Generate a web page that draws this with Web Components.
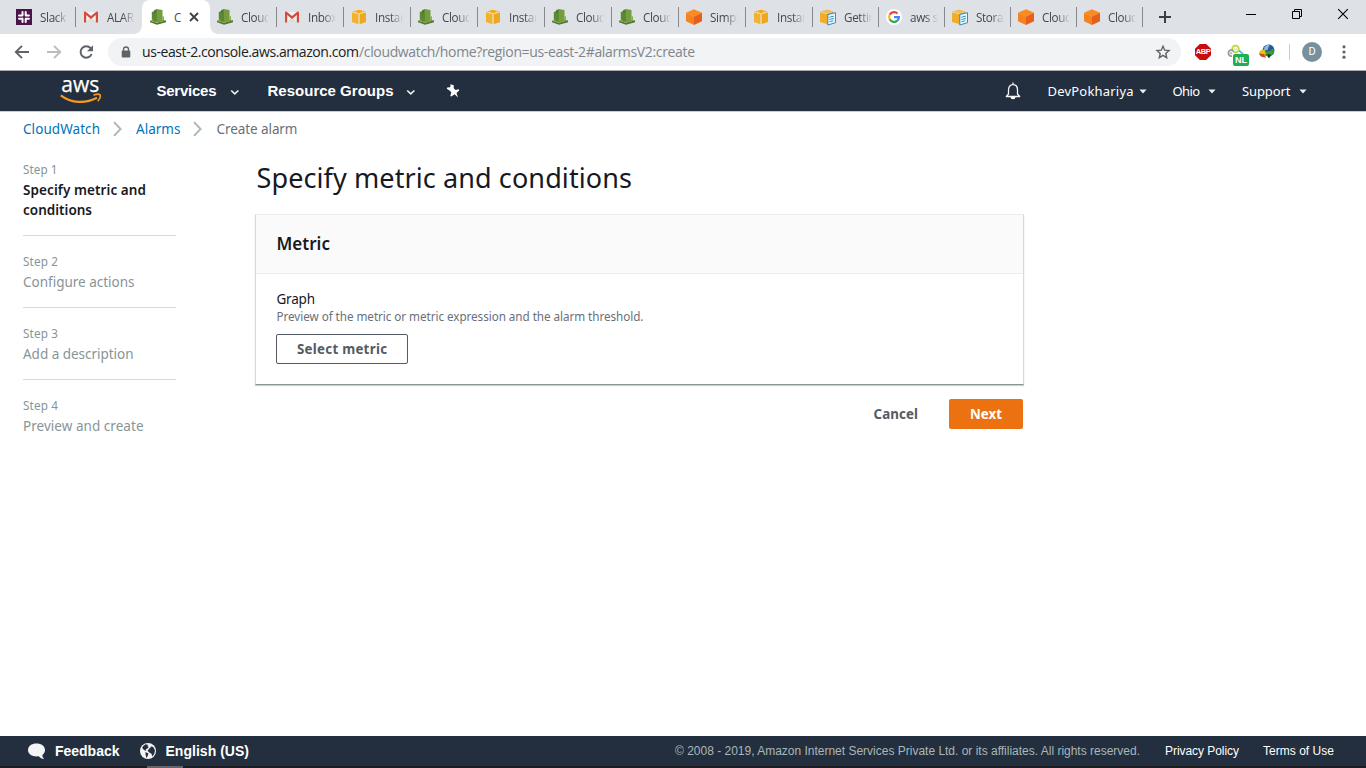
<!DOCTYPE html>
<html lang="en">
<head>
<meta charset="utf-8">
<title>Create alarm</title>
<style>
html,body{margin:0;padding:0;height:100%;overflow:hidden;background:#fff}
body{font-family:"Noto Sans","Open Sans",sans-serif}
</style>
</head>
<body>
<console-page></console-page>
<script>
function define(name, css, html, after) {
  const tpl = document.createElement('template');
  tpl.innerHTML = `<style>*{box-sizing:border-box}${css}</style>${html}`;
  customElements.define(name, class extends HTMLElement {
    constructor() {
      super();
      this.attachShadow({mode: 'open'}).appendChild(tpl.content.cloneNode(true));
    }
    connectedCallback() { if (after) after(this, this.shadowRoot); }
  });
}

/* Icon set, one SVG body per name: [viewBox width, height, markup] */
const ICONS = {
  slack: [16,16,'<path fill="#4a154b" d="M0 0h16v16H0z"/><g stroke="#fff" stroke-width="2" stroke-linecap="round"><path d="M6.500 3v3.400M9.700 3v3.400M9.700 9.700v3.200M6.500 9.700v3.200M3 6.500h3.400M9.700 6.500h3.200M3 9.700h3.400M9.700 9.700h3.200"/></g>'],
  gmail: [16,16,'<path fill="#f2f2f2" d="M1.5 3h13v10.500h-13z"/><path fill="#dcdcdc" d="M3 13.500 8 8l5 5.500z"/><path fill="#d54b3d" d="M1 13.500V3.400C1 2.600 2 2.200 2.700 2.700L8 7l5.300-4.300c.7-.5 1.700-.1 1.700.7v10.100h-2.200V6.100L8 10 3.200 6.100v7.400z"/>'],
  watch: [16,16,'<path fill="#4c7a2e" d="M0 11.700 7 13.700v2.100l-7-2.500zM16 11.200v2l-9 2.600v-2.100z"/><path fill="#759c3e" d="m0 11.700 5-1.700 11 1.200-9 2.500z"/><path fill="#5c8733" d="M1.800 3 4 2.300v9L1.800 10.600z"/><path fill="#4c7a2e" d="M4 1.200 7.200 0v12.300L4 11.300z"/><path fill="#759c3e" d="m6.500 0 6 1v10.200l-6 1.200z"/><path fill="#86ae4b" d="m12.500 7 1.500.4v3.700l-1.500.4z"/><path fill="#5c8733" d="m4 3.800 2.500.7v8L4 11.500z"/>'],
  cube: [16,16,'<path fill="#f2b22e" d="M1 3.300 7.500 5v10.200L1 13z"/><path fill="#eea820" d="M15 3.300 8.500 5v10.200L15 13z"/><path fill="#f7a80d" d="M1.500 2.500 8 .8l6.500 1.700L8 4.300z"/><path stroke="#f6d78c" stroke-width=".9" d="M1 2.900 8 4.700l7-1.800M8 4.700v10.600M4.500 2.300v2.200m7-2.200v2.200" fill="none"/>'],
  box: [16,16,'<path fill="#fb8b21" d="M8 .2 16 3.700 8 7.500 0 3.700z"/><path fill="#f58220" d="M0 3.700 8 7.500V16L0 12.300z"/><path fill="#e85f1a" d="M16 3.700 8 7.500V16l8-3.700z"/>'],
  doc: [16,16,'<path fill="#efad28" d="M0 3.200 7 5v10L0 13z"/><path fill="#f4bc4c" d="M0 2.500 7 .5l7 2-7 1.800z"/><path fill="#dc981c" d="M7 4.800 13.500 3v10L7 15z"/><path fill="#e8f5fb" stroke="#2d91c4" d="m7.800 5.500 7.700-1.800v10L7.800 16z"/><path stroke="#2d91c4" d="m10.200 8 3.600-.8M10.200 10.300l3.600-.8M10.200 12.500l3-.7M9 8.200h.6M9 10.500h.6M9 12.700h.6"/>'],
  google: [16,16,'<circle cx="8" cy="8" r="8" fill="#fff"/><g fill="none" stroke-width="2.200"><path stroke="#ea4335" d="M3.700 5.700A4.900 4.900 0 0 1 11.500 4.500"/><path stroke="#fbbc05" d="M3.700 5.700a4.900 4.900 0 0 0 0 4.600"/><path stroke="#34a853" d="M3.700 10.300a4.900 4.900 0 0 0 7.600 1.300"/><path stroke="#4285f4" d="M11.300 11.600A4.900 4.900 0 0 0 12.900 8.100H8"/></g>'],
  close: [10,10,'<path d="m1 1 8 8M9 1 1 9" stroke="#3c4043" stroke-width="1.800"/>'],
  plus: [12,12,'<path d="M6 0v12M0 6h12" stroke="#3c4043" stroke-width="2"/>'],
  min: [10,10,'<path d="M0 5.500h10" stroke="#000"/>'],
  restore: [10,10,'<path d="M.5 2.500h7v7h-7zM2.500 2.500v-2h7v7h-2" stroke="#000" fill="none"/>'],
  quit: [10,10,'<path d="m.2.2 9.600 9.600M9.800.2.2 9.800" stroke="#000" stroke-width="1.100"/>'],
  back: [16,14,'<path d="M15 7H2M8 .8 1.800 7 8 13.200" fill="none" stroke="#5f6368" stroke-width="1.900"/>'],
  forward: [16,14,'<path d="M0 7h13M7 .8 13.200 7 7 13.200" fill="none" stroke="#babcbe" stroke-width="1.900"/>'],
  reload: [16,16,'<path d="M12.600 10A5.700 5.700 0 1 1 11.600 4.200L13 5.500" fill="none" stroke="#5f6368" stroke-width="2"/><path d="M14 1.200v6H8z" fill="#5f6368"/>'],
  lock: [10,12,'<path d="M2.500 5V3.500a2.500 2.500 0 0 1 5 0V5" fill="none" stroke="#5f6368" stroke-width="1.300"/><rect x=".7" y="4.500" width="8.600" height="7" rx="1" fill="#5f6368"/>'],
  star: [16,16,'<path d="m8 2.200 1.700 4 4.300.4-3.200 2.900.9 4.200L8 11.400l-3.700 2.300.9-4.200L2 6.600l4.300-.4z" fill="none" stroke="#5f6368" stroke-width="1.400"/>'],
  idm: [18,16,'<circle cx="10.500" cy="6.500" r="6" fill="#2a5a94"/><path fill="#88bde8" d="M6.500 3a6 6 0 0 1 5-2.300L9.500 6 6 6.500z"/><path fill="#e2c51c" d="M1 9c1-3 4-4.500 6-2.500L8 10c-2 2-5 1.500-7-1z"/><path fill="#cf4a24" d="M1 9.500 6 10l2 3.500c-2 .3-6-.5-7-4z"/><path fill="#3d9e2d" d="m8 8 5-1.500 2.500-2L16 8l-5 6-3-3z"/><path fill="#153a20" d="m9 10 4 .5-2 4z"/>'],
  links: [18,16,'<g fill="none" stroke-width="1.700"><circle cx="8.500" cy="5" r="3.300" stroke="#b8d63a"/><circle cx="8.500" cy="5" r="1" stroke="#d5e68a" stroke-width="1"/><path stroke="#999" d="M6.500 7A3 3 0 1 0 5 12"/><circle cx="4" cy="9.200" r=".8" stroke="#aaa" stroke-width="1"/><path stroke="#58b7e8" d="m12 6.500 4 3.500"/></g>'],
  dots: [4,16,'<g fill="#5f6368"><circle cx="2" cy="2.800" r="1.600"/><circle cx="2" cy="8" r="1.600"/><circle cx="2" cy="13.200" r="1.600"/></g>'],
  chevron: [10,7,'<path d="m1.200 1.500 3.600 3.400 3.600-3.400" fill="none" stroke="#eee" stroke-width="1.700"/>'],
  caret: [8,5,'<path d="M.4.600h7.200L4 4.600z" fill="#eee"/>'],
  pin: [14,14,'<path fill="#fff" d="M4.500.2 7.800 1.300 7.700 4.300l1.800 1.600 3.300-.6.400 1.300-2.700 2.300L12 13.600 8.700 10.300 5.300 12.500l-1-.6 1-3.600-1.800-1.800L.8 4.800l.4-1.200L4.300 3.200z"/>'],
  bell: [16,18,'<path d="M8 .5v2M3.500 12V8C3.500 4.600 5.400 2.600 8 2.600s4.500 2 4.500 5.400v4l2.200 2.500H1.300z" fill="none" stroke="#f4f4f4" stroke-width="1.300" stroke-linejoin="round"/><path fill="#fff" d="M5.500 15h5a2.500 2.300 0 0 1-5 0z"/>'],
  crumb: [10,16,'<path d="m1 1.200 6.600 6.800L1 14.800" fill="none" stroke="#aab7b8" stroke-width="1.900"/>'],
  bubble: [18,17,'<path fill="#f5f5f5" d="M8.500.5C13.500.5 17 3.200 17 7c0 2.200-1 3.800-2.700 5 .1 1.600.8 3 1.900 4.200-2.300-.3-4.200-1.300-5.500-2.900C5 14 0 11.500 0 7 0 3.200 3.500.5 8.500.5z"/>'],
  globe: [16,16,'<circle cx="8" cy="8" r="8" fill="#f5f5f5"/><path fill="#232f3e" d="M3 3.200 5.500 1.300l3 .7L7.200 3l1.600.9L7.500 5.500l-1.800.8.600 1.600L4 6.900 2.200 5zM9.500 5.200l2.300-2 2 1.500 1.200 3-.8 3.300-2 2.500-.7-2.800-2.200-1.200L7.600 7.800zM5.500 9l3 1.500-.8 2.300L6.500 15l-.9-3z"/>'],
  aws: [44,28,'<text x="1.300" y="14.600" textLength="38" lengthAdjust="spacingAndGlyphs" font-family="Open Sans" font-weight="400" font-size="21.500" fill="#fff" stroke="#fff" stroke-width=".25">aws</text><path d="M.8 18.300c10.500 8.200 25 8.500 36.200 2.500" fill="none" stroke="#f7981f" stroke-width="2.200"/><path d="M33.500 18.300c2.500-1.100 5.500-1.200 6.500-.6.700 1.500-.3 4.400-2.300 6.400" fill="none" stroke="#f7981f" stroke-width="1.600"/>']
};

define('ui-icon', ':host{display:block;flex:none;line-height:0}svg{display:block;overflow:visible}', '<svg></svg>', (el, root) => {
  const [w, h, body] = ICONS[el.getAttribute('name')];
  const svg = root.querySelector('svg');
  svg.setAttribute('viewBox', `0 0 ${w} ${h}`);
  svg.setAttribute('width', w);
  svg.setAttribute('height', h);
  svg.innerHTML = body;
});

/* Tracks a line of text so that it fills the width named by its "w" attribute. */
define('fit-text', ':host{display:block;flex:none;white-space:nowrap}span{display:inline-block}', '<span><slot></slot></span>', (el, root) => {
  const w = parseFloat(el.getAttribute('w'));
  const span = root.querySelector('span');
  el.style.width = w + 'px';
  const natural = span.getBoundingClientRect().width;
  span.style.letterSpacing = ((w - natural) / Math.max(1, el.textContent.length - 1)) + 'px';
});

define('browser-tab', `
:host{display:flex;flex:none;width:67px;height:34px;padding-left:7px;align-items:center;position:relative;font:11.700px/16px "Open Sans",sans-serif;letter-spacing:-.35px;color:#45484c}
:host([narrow]){width:66px}
ui-icon{margin-right:8px}
.t{width:28px;overflow:hidden;white-space:nowrap;-webkit-mask-image:linear-gradient(90deg,#000 55%,transparent)}
i{margin-left:auto;width:1px;height:20px;background:#85888c}
.x{display:none}
:host([joined]) i{display:none}
:host([active]){background:#fff;border-radius:8px 8px 0 0;margin-left:-1px;width:68px;padding-left:8px}
:host([active]) .t{width:7px;-webkit-mask-image:none}
:host([active]) .x{display:block;margin:0 0 0 8px}
:host([active])::before,:host([active])::after{content:"";position:absolute;bottom:0;width:8px;height:8px}
:host([active])::before{left:-8px;background:radial-gradient(circle at 0 0,transparent 7.500px,#fff 8px)}
:host([active])::after{right:-8px;background:radial-gradient(circle at 100% 0,transparent 7.500px,#fff 8px)}
`, '<ui-icon></ui-icon><div class="t"><slot></slot></div><ui-icon class="x" name="close"></ui-icon><i></i>');

const TABS = [['slack','Slack'],['gmail','ALARM',1],['watch','C',1,1],['watch','Cloud'],['gmail','Inbox'],['cube','Instan'],['watch','Cloud'],['cube','Instan'],['watch','Cloud'],['watch','Cloud'],['box','Simpl'],['cube','Instan'],['doc','Gettin'],['google','aws s'],['doc','Storag'],['box','Cloud'],['box','Cloud']];

define('tab-strip', `
:host{display:flex;height:34px;background:#dee1e6;padding-left:9px;align-items:center}
.new{margin-left:16px}.win{display:flex;margin:0 18px 6px auto;gap:36px}
`, '<div class="new"><ui-icon name="plus"></ui-icon></div><div class="win"><ui-icon name="min"></ui-icon><ui-icon name="restore"></ui-icon><ui-icon name="quit"></ui-icon></div>', (el, root) => {
  const end = root.querySelector('.new');
  TABS.forEach(([icon, text, joined, active], i) => {
    const tab = document.createElement('browser-tab');
    if (joined) tab.setAttribute('joined', '');
    if (active) tab.setAttribute('active', '');
    if (i > 11) tab.setAttribute('narrow', '');
    tab.textContent = text;
    const ic = tab.shadowRoot.querySelector('ui-icon');
    ic.setAttribute('name', icon);
    root.insertBefore(tab, end);
  });
});

define('address-bar', `
:host{display:flex;height:36px;background:#fff;align-items:center;padding:0 20px 0 14px;font:14px/20px "Open Sans",sans-serif}
.f{margin-left:17px}.r{margin-left:16px}
.pill{display:flex;align-items:center;margin-left:13px;width:1073px;height:28px;border-radius:14px;background:#f1f3f4;padding:0 10px 0 13px;color:#202124}
.pill .u{margin-left:11px}.path{color:#80868b}.s{margin-left:auto}
.abp{margin-left:14px;width:16px;height:16px;background:#c70d0d;clip-path:polygon(30% 0,70% 0,100% 30%,100% 70%,70% 100%,30% 100%,0 70%,0 30%);color:#fff;font:bold 7.500px/16px "Liberation Sans",sans-serif;letter-spacing:-.4px;text-align:center}
.nl{position:relative;margin-left:16px}
.nl b{position:absolute;left:6px;top:10px;width:16px;height:12px;border-radius:2px;background:#1fae55;color:#fff;font:bold 9px/12px "Liberation Sans",sans-serif;text-align:center}
.idm{margin-left:13px}
.bar{margin-left:13px;width:1px;height:16px;background:#ccc}
.av{margin-left:12px;width:20px;height:20px;border-radius:50%;background:#78909c;color:#fff;font:11px/20px Roboto,sans-serif;text-align:center}
.d{margin-left:auto}
`, `<ui-icon name="back"></ui-icon><ui-icon class="f" name="forward"></ui-icon><ui-icon class="r" name="reload"></ui-icon>
<div class="pill"><ui-icon name="lock"></ui-icon><fit-text class="u" w="217">us-east-2.console.aws.amazon.com</fit-text><fit-text class="path" w="336">/cloudwatch/home?region=us-east-2#alarmsV2:create</fit-text><ui-icon class="s" name="star"></ui-icon></div>
<div class="abp">ABP</div><div class="nl"><ui-icon name="links"></ui-icon><b>NL</b></div><ui-icon class="idm" name="idm"></ui-icon><div class="bar"></div><div class="av">D</div><ui-icon class="d" name="dots"></ui-icon>`);

define('aws-nav', `
:host{display:flex;align-items:center;height:42px;background:#232f3e;border-top:1px solid #a9acaf;border-bottom:1px solid #c9ccd0;padding-left:60px;color:#fff;font:13px/20px "Noto Sans",sans-serif}
.logo{width:44px;margin-right:52.500px}
.b{font:bold 15px/20px "Liberation Sans",sans-serif}
.c1{margin:2px 28px 0 13px}.c2{margin:2px 30px 0 12px}
.bell{margin:0 27px 0 auto}
.k{margin:1px 26px 0 5px}.k2{margin:1px 26px 0 8px}.k3{margin:1px 59.500px 0 8px}
`, `<ui-icon class="logo" name="aws"></ui-icon><fit-text class="b" w="60">Services</fit-text><ui-icon class="c1" name="chevron"></ui-icon><fit-text class="b" w="126">Resource Groups</fit-text><ui-icon class="c2" name="chevron"></ui-icon><ui-icon name="pin"></ui-icon>
<ui-icon class="bell" name="bell"></ui-icon><fit-text w="86">DevPokhariya</fit-text><ui-icon class="k" name="caret"></ui-icon><fit-text w="27.500">Ohio</fit-text><ui-icon class="k2" name="caret"></ui-icon><fit-text w="48.500">Support</fit-text><ui-icon class="k3" name="caret"></ui-icon>`);

define('bread-crumbs', `
:host{display:flex;align-items:center;height:34px;padding-left:23px;font-size:13.500px;line-height:20px;color:#687078}
.a{color:#0073bb}ui-icon{margin:0 13px}.y{margin:0 14px 0 12px}
`, `<fit-text class="a" w="77">CloudWatch</fit-text><ui-icon name="crumb"></ui-icon><fit-text class="a" w="44.500">Alarms</fit-text><ui-icon class="y" name="crumb"></ui-icon><fit-text w="81">Create alarm</fit-text>`);

define('wizard-step', `
:host{display:block;width:153px;padding-bottom:15px;border-bottom:1px solid #d5dbdb;margin-bottom:16px;font-size:13.500px;line-height:20px;color:#879596}
:host(:last-child){border:0}
.n{font-size:11.700px;margin:-1px 0 1px}
:host([current]) .t{color:#16191f;font-weight:600}
`, '<div class="n"><slot name="n"></slot></div><div class="t"><slot></slot></div>');

define('ui-button', `
:host{display:flex;height:30px;align-items:center;justify-content:center;border:1px solid transparent;border-radius:2px;font-size:13.300px;line-height:20px;font-weight:700;color:#545b64;width:132px}
:host([outline]){border-color:#545b64}
:host([primary]){background:#ec7211;color:#fff;width:74px}
:host([link]){width:auto}
`, '<slot></slot>');

define('metric-card', `
:host{display:block;width:769px;height:171px;border:1px solid #eaeded;border-left-color:#d5dbdb;border-right-color:#d5dbdb;border-bottom:1px solid #879596;box-shadow:0 1px 1px rgba(0,28,36,.2);background:#fff}
header{height:59px;background:#fafafa;border-bottom:1px solid #eaeded;padding:17px 20.500px;font-size:17px;line-height:24px;font-weight:600;color:#16191f}
.body{padding:16px 20px}
.g{margin-left:.5px;font-size:13.500px;line-height:18px;color:#16191f}
.p{margin:-1px 0 9px .5px;font-size:11.700px;line-height:18px;color:#687078}
`, `<header><fit-text w="53.500">Metric</fit-text></header><div class="body"><fit-text class="g" w="38.500">Graph</fit-text><fit-text class="p" w="367">Preview of the metric or metric expression and the alarm threshold.</fit-text><ui-button outline><fit-text w="90">Select metric</fit-text></ui-button></div>`);

define('console-footer', `
:host{display:flex;align-items:center;height:30px;background:#232f3e;padding-left:28px;color:#fff;font:12px/20px "Liberation Sans",sans-serif}
.b{font-size:14px;font-weight:bold}
.f{margin:0 20px 0 9px}.e{margin-left:10px}.c{margin-left:auto;color:#aab7b8}.p{margin-left:25px}.t{margin:0 32px 0 24px}
`, `<ui-icon name="bubble"></ui-icon><fit-text class="b f" w="64.500">Feedback</fit-text><ui-icon name="globe"></ui-icon><fit-text class="b e" w="83.500">English (US)</fit-text>
<fit-text class="c" w="465">© 2008 - 2019, Amazon Internet Services Private Ltd. or its affiliates. All rights reserved.</fit-text><fit-text class="p" w="74">Privacy Policy</fit-text><fit-text class="t" w="71">Terms of Use</fit-text>`);

define('console-page', `
:host{display:flex;flex-direction:column;width:1366px;height:768px;background:#fff}
main{display:flex;flex:1;padding:14px 0 0 23px}
.steps{width:232px;flex:none}
section{padding-top:1px}
h1{margin:0 0 19px 1.500px;font-size:27px;line-height:34px;font-weight:400;color:#16191f}
.act{display:flex;justify-content:flex-end;gap:30px;width:768px;margin-top:14px}
.task{height:2px;background:#1b1b20;padding-left:147px}.task i{display:block;width:36px;height:2px;background:#66666a}
`, `<tab-strip></tab-strip><address-bar></address-bar><aws-nav></aws-nav><bread-crumbs></bread-crumbs>
<main><div class="steps">
<wizard-step current><fit-text slot="n" w="34.500">Step 1</fit-text><fit-text w="123">Specify metric and</fit-text><fit-text w="69">conditions</fit-text></wizard-step>
<wizard-step><fit-text slot="n" w="35">Step 2</fit-text><fit-text w="111.500">Configure actions</fit-text></wizard-step>
<wizard-step><fit-text slot="n" w="35">Step 3</fit-text><fit-text w="110.500">Add a description</fit-text></wizard-step>
<wizard-step><fit-text slot="n" w="35">Step 4</fit-text><fit-text w="120.500">Preview and create</fit-text></wizard-step>
</div><section><h1><fit-text w="375.500">Specify metric and conditions</fit-text></h1><metric-card></metric-card>
<div class="act"><ui-button link><fit-text w="44.500">Cancel</fit-text></ui-button><ui-button primary><fit-text w="32">Next</fit-text></ui-button></div></section></main>
<console-footer></console-footer><div class="task"><i></i></div>`);
</script>
</body>
</html>
